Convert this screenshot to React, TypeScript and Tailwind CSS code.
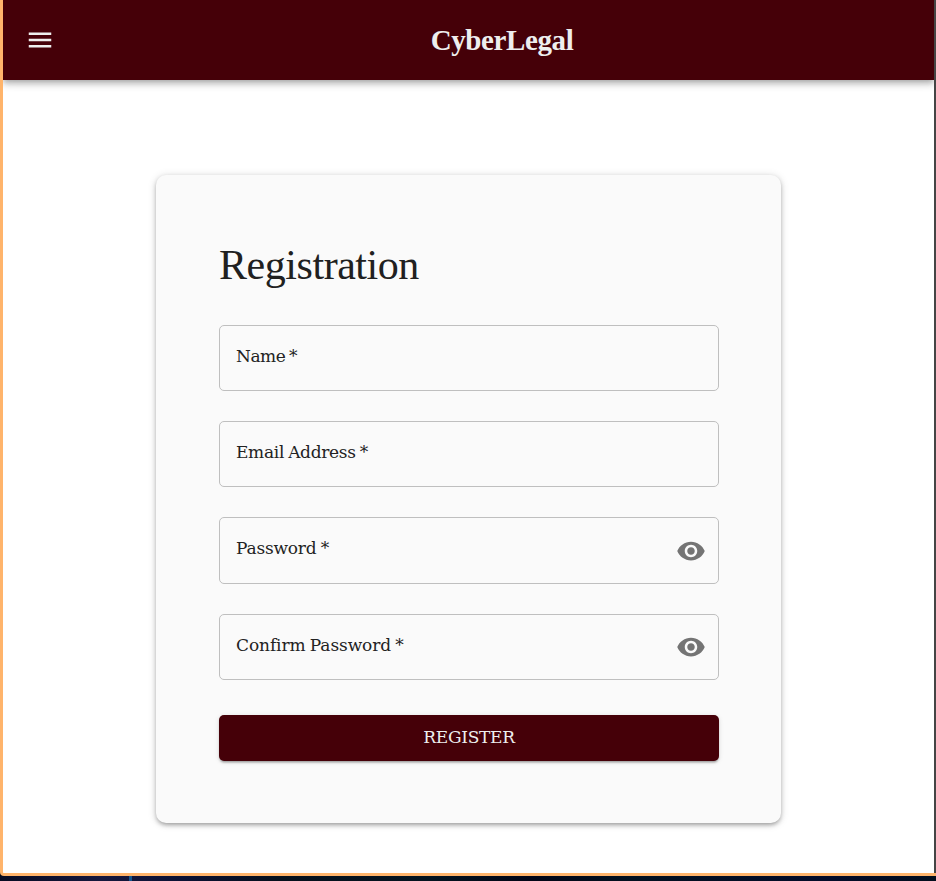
import { useState } from "react";

function Eye() {
  return (
    <svg viewBox="0 0 24 24" className="h-[30px] w-[30px] fill-[#747474]" aria-hidden="true">
      <path d="M12 4.5C7 4.5 2.73 7.61 1 12c1.73 4.39 6 7.5 11 7.5s9.27-3.11 11-7.5c-1.73-4.39-6-7.5-11-7.5zM12 17c-2.76 0-5-2.24-5-5s2.24-5 5-5 5 2.24 5 5-2.24 5-5 5zm0-8c-1.66 0-3 1.34-3 3s1.34 3 3 3 3-1.34 3-3-1.34-3-3-3z" />
    </svg>
  );
}

type FieldProps = { label: string; password?: boolean; size: string; tracking: string };

function Field({ label, password, size, tracking }: FieldProps) {
  const [visible, setVisible] = useState(false);
  return (
    <div className={`flex w-full rounded-[5px] border border-[#bfbfbf] pl-4 pr-3 ${size}`}>
      <span className={`pt-[18px] font-['DejaVu_Serif',serif] text-[17px] leading-6 text-[#222] [word-spacing:-1px] ${tracking}`}>
        {label}
      </span>
      {password && (
        <button className="ml-auto" aria-pressed={visible} onClick={() => setVisible(!visible)}>
          <Eye />
        </button>
      )}
    </div>
  );
}

export default function App() {
  return (
    <div className="flex h-[881px] w-[936px] flex-col overflow-hidden bg-[#020b19]">
      <div className="flex h-[876px] flex-col rounded-bl-[4px] border-b-[3px] border-l-[3px] border-[#ffb46b] bg-white">
        <div className="flex h-[873px] flex-col overflow-hidden border-r-2 border-[#454545]">
          <header className="grid h-20 shrink-0 grid-cols-[72px_1fr_27px] items-center bg-[#450008] pl-[22px] shadow-[0_2px_5px_-1px_rgba(0,0,0,0.2),0_5px_6px_rgba(0,0,0,0.14),0_1px_12px_rgba(0,0,0,0.12)]">
            <svg viewBox="0 0 24 24" className="h-[30px] w-[30px] fill-[#eeeeee]" aria-hidden="true">
              <path d="M3 18h18v-2H3v2zm0-5h18v-2H3v2zm0-7v2h18V6H3z" />
            </svg>
            <h1 className="text-center font-['Liberation_Serif',serif] text-[29px] font-bold leading-10 tracking-[-0.4px] text-[#eeeeee]">CyberLegal</h1>
          </header>
          <main className="flex justify-center pt-[95px]">
            <form className="h-[648px] w-[625px] rounded-[10px] bg-[#fafafa] px-[63px] pt-[62px] shadow-[0_3px_4px_-2px_rgba(0,0,0,0.2),0_2px_5px_rgba(0,0,0,0.2),0_1px_10px_rgba(0,0,0,0.12)]" onSubmit={(e) => e.preventDefault()}>
              <h2 className="mb-[32px] h-14 whitespace-nowrap font-['Liberation_Serif',serif] text-[42px] leading-[56px] tracking-[-0.45px] text-[#202020]">Registration</h2>
              <div className="flex w-[500px] flex-col gap-[30px]">
                <Field label="Name *" size="h-[66px]" tracking="tracking-[-0.5px]" />
                <Field label="Email Address *" size="h-[66px]" tracking="tracking-[-0.3px]" />
                <Field label="Password *" size="h-[67px]" tracking="tracking-[-0.2px]" password />
                <Field label="Confirm Password *" size="h-[66px]" tracking="tracking-[-0.1px]" password />
              </div>
              <button className="mt-[35px] h-[46px] w-[500px] rounded-[5px] bg-[#450008] pb-[2px] font-['DejaVu_Serif',serif] text-[17px] leading-6 tracking-[-0.3px] text-[#eeeeee] shadow-[0_3px_2px_-2px_rgba(0,0,0,0.2),0_2px_2px_rgba(0,0,0,0.14),0_1px_5px_rgba(0,0,0,0.12)]">REGISTER</button>
            </form>
          </main>
        </div>
      </div>
      <div className="flex h-[5px] bg-[linear-gradient(90deg,#070b22_0,#15173d_100px,#0b1134_180px,#06101c_280px,#03131f_430px,#020516_530px,#02101f_630px,#030b29_830px,#020d1c_936px)]">
        <span className="ml-[129px] h-full w-[3px] bg-[#14548c]" />
      </div>
    </div>
  );
}
